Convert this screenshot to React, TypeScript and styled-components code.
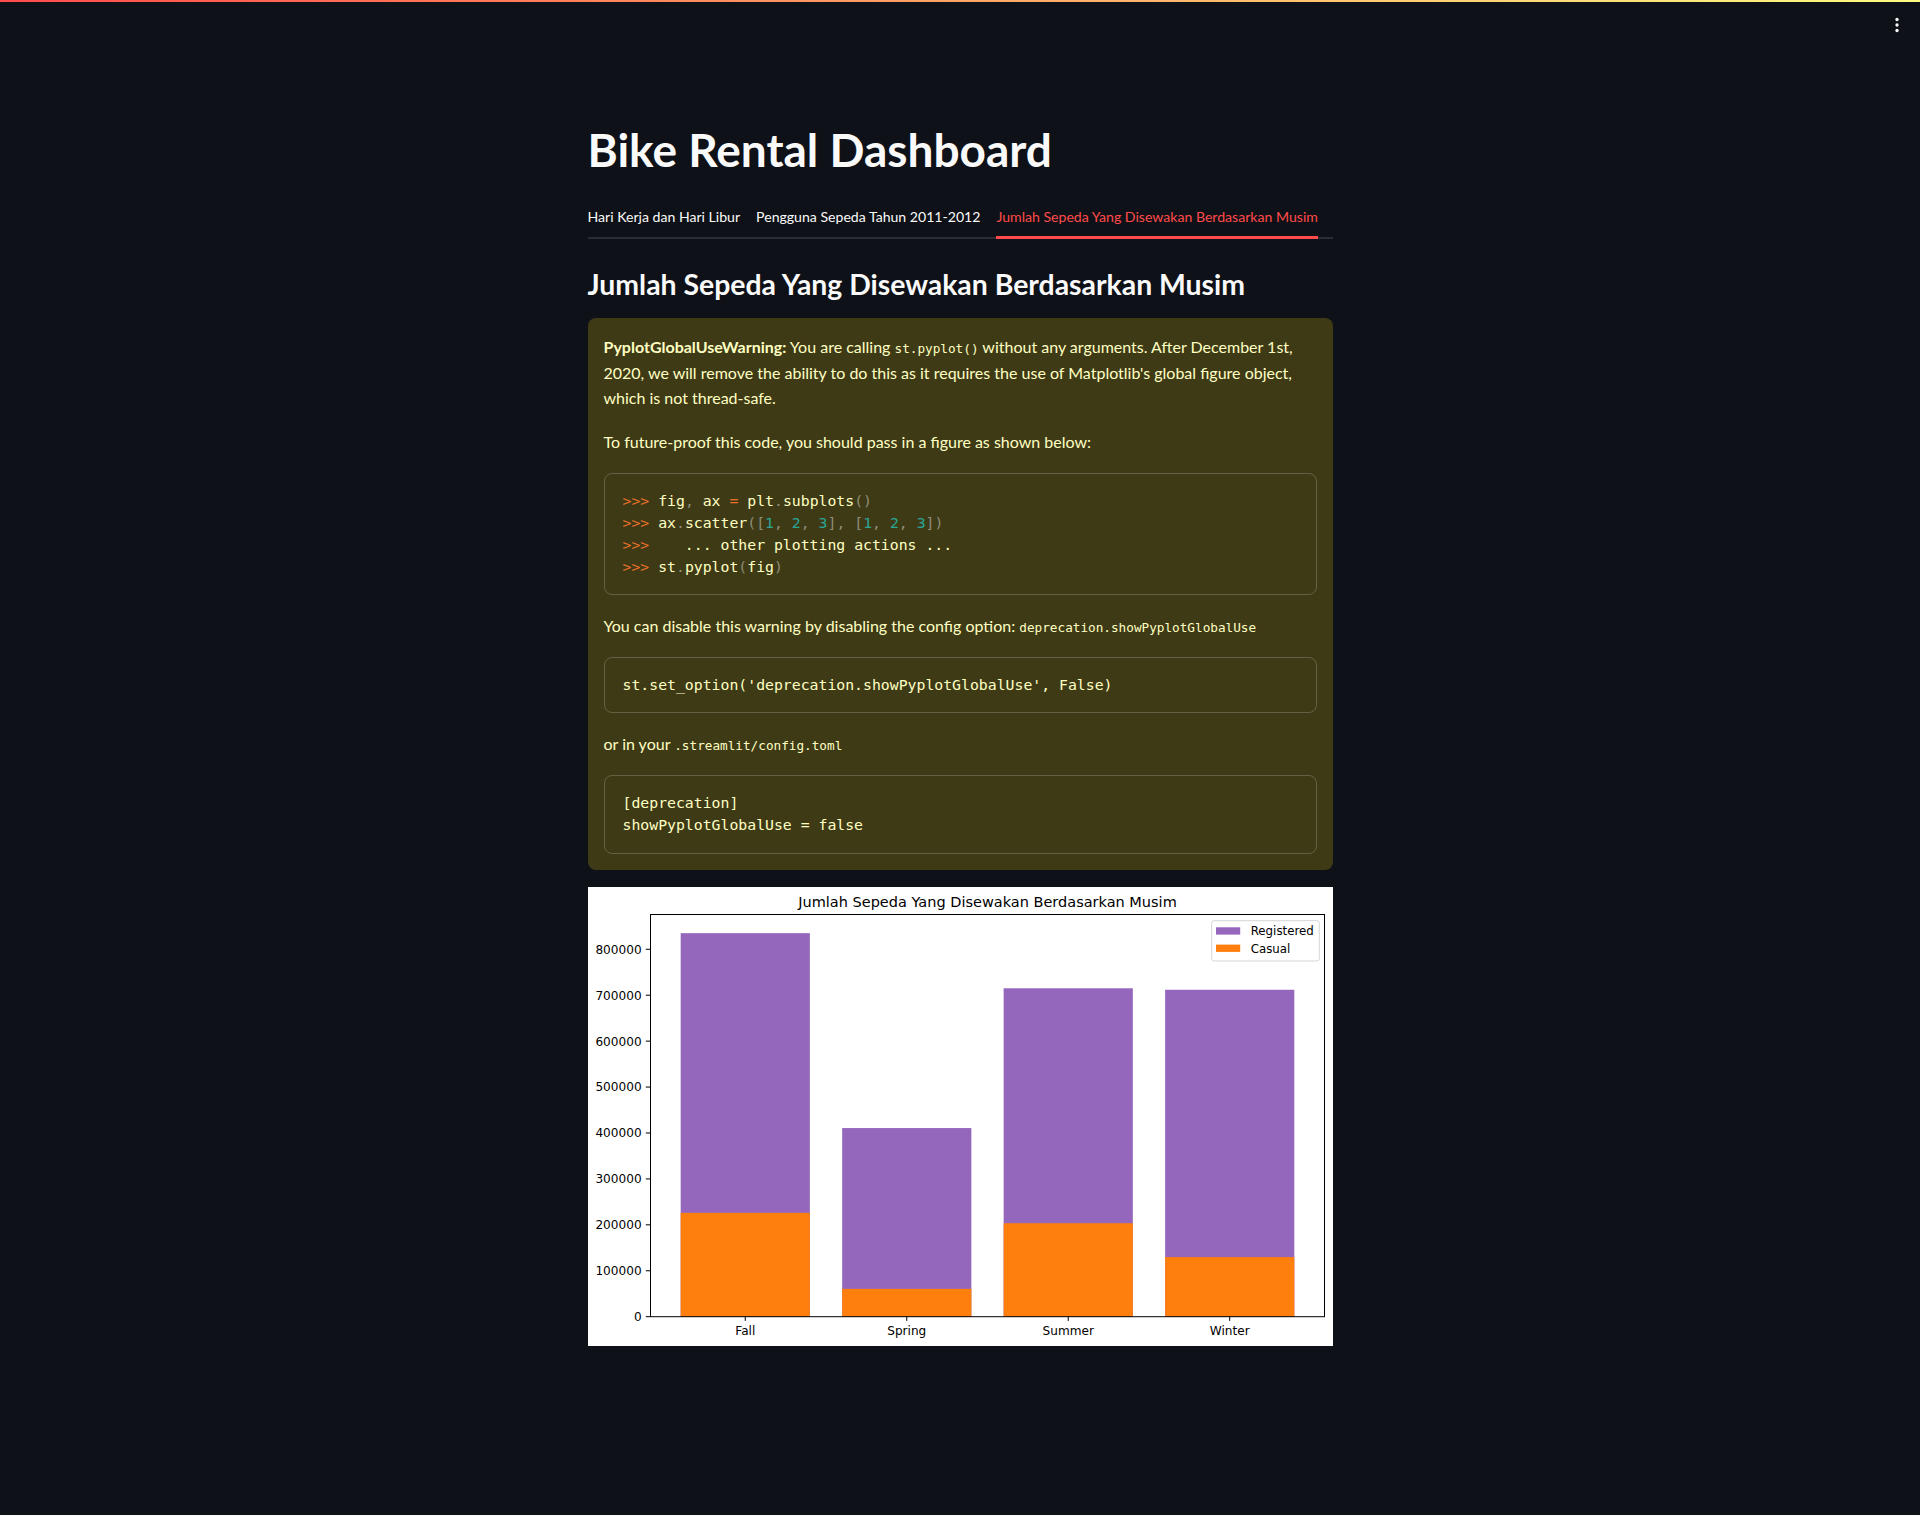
import React from "react";
import styled, { createGlobalStyle } from "styled-components";

const GlobalStyle = createGlobalStyle`
  html, body {
    margin: 0;
    padding: 0;
    background: #0e1117;
  }
  body {
    font-family: Lato, "Noto Sans", sans-serif;
    color: #fafafa;
    -webkit-font-smoothing: antialiased;
  }
  #root {
    min-height: 1515px;
  }
`;

const Decoration = styled.div`
  height: 2px;
  background: linear-gradient(90deg, #ff4b4b, #fffd80);
`;

const Header = styled.header`
  height: 46px;
  display: flex;
  align-items: center;
  justify-content: flex-end;
  padding-right: 12px;
`;

const MenuButton = styled.button`
  width: 22px;
  height: 22px;
  padding: 0;
  border: 0;
  background: transparent;
  color: #fafafa;
  display: flex;
  align-items: center;
  justify-content: center;
  cursor: pointer;
`;

const Main = styled.main`
  width: 745px;
  margin: 0 auto;
  padding: 74px 0 160px;
  display: flex;
  flex-direction: column;
`;

const Title = styled.h1`
  margin: 0 0 20px;
  font-size: 46px;
  font-weight: 700;
  line-height: 1.2;
  color: #fafafa;
`;

const TabList = styled.div`
  display: flex;
  gap: 16px;
  height: 40px;
  border-bottom: 2px solid #2b2c35;
  margin-bottom: 28px;
`;

const Tab = styled.button<{ $active?: boolean }>`
  align-self: flex-start;
  box-sizing: border-box;
  height: 42px;
  padding: 0;
  margin: 0;
  border: 0;
  border-bottom: 3px solid ${(p) => (p.$active ? "#ff4b4b" : "transparent")};
  background: none;
  font-family: inherit;
  font-size: 14.1px;
  color: ${(p) => (p.$active ? "#ff4b4b" : "#fafafa")};
  cursor: pointer;
  white-space: nowrap;
`;

const SectionTitle = styled.h2`
  margin: 0 0 17px;
  font-size: 28.4px;
  font-weight: 700;
  line-height: 1.2;
  color: #fafafa;
`;

const Alert = styled.div`
  background: rgba(255, 227, 18, 0.2);
  color: #ffffc2;
  border-radius: 8px;
  padding: 16px;
  display: flex;
  flex-direction: column;
  gap: 18px;
  margin-bottom: 17px;
  font-size: 16px;
  line-height: 25.6px;
`;

const Para = styled.p`
  margin: 0;
`;

const Strong = styled.strong`
  font-weight: 700;
`;

const InlineCode = styled.code`
  font-family: "DejaVu Sans Mono", "Liberation Mono", monospace;
  font-size: 12.7px;
  line-height: 1;
`;

const CodeBlock = styled.pre`
  margin: 0;
  border: 1px solid rgba(250, 250, 250, 0.2);
  border-radius: 8px;
  padding: 16.3px 18px;
  font-family: "DejaVu Sans Mono", "Liberation Mono", monospace;
  font-size: 14.8px;
  line-height: 22px;
  color: #ffffc2;
  white-space: pre;
  overflow: hidden;
`;

const Tok = styled.span<{ $kind: "prompt" | "punct" | "num" | "op" }>`
  color: ${(p) =>
    p.$kind === "prompt" || p.$kind === "op"
      ? "#e8702a"
      : p.$kind === "num"
      ? "#2aa596"
      : "#8f8d76"};
`;

const ChartFrame = styled.figure`
  margin: 0;
  width: 745px;
  height: 459px;
  background: #ffffff;
`;

const ChartSvg = styled.svg`
  display: block;
  width: 745px;
  height: 459px;
  font-family: "DejaVu Sans", sans-serif;
`;

const data = [
  { label: "Fall", registered: 835038, casual: 226091 },
  { label: "Spring", registered: 410726, casual: 60622 },
  { label: "Summer", registered: 715067, casual: 203522 },
  { label: "Winter", registered: 711831, casual: 129782 },
];

const AX = { left: 62, right: 737, top: 27, bottom: 429.7 };
const PURPLE = "#9467bd";
const ORANGE = "#ff7f0e";

function BarChart() {
  const ymax = 835038 * 1.05;
  const s = (AX.bottom - AX.top) / ymax;
  const u = (AX.right - AX.left) / 4.18;
  const cx = (i: number) => AX.left + (0.59 + i) * u;
  const bw = 0.8 * u;
  const y = (v: number) => AX.bottom - v * s;
  const ticks = [0, 100000, 200000, 300000, 400000, 500000, 600000, 700000, 800000];
  return (
    <ChartSvg viewBox="0 0 745 459">
      <text x={(AX.left + AX.right) / 2} y={20} fontSize={14.5} textAnchor="middle" fill="#000">
        Jumlah Sepeda Yang Disewakan Berdasarkan Musim
      </text>
      {data.map((d, i) => (
        <g key={d.label}>
          <rect x={cx(i) - bw / 2} y={y(d.registered)} width={bw} height={AX.bottom - y(d.registered)} fill={PURPLE} />
          <rect x={cx(i) - bw / 2} y={y(d.casual)} width={bw} height={AX.bottom - y(d.casual)} fill={ORANGE} />
          <line x1={cx(i)} x2={cx(i)} y1={AX.bottom} y2={AX.bottom + 4.2} stroke="#000" strokeWidth={1} />
          <text x={cx(i)} y={448} fontSize={12.1} textAnchor="middle" fill="#000">
            {d.label}
          </text>
        </g>
      ))}
      {ticks.map((t) => (
        <g key={t}>
          <line x1={AX.left - 4.2} x2={AX.left} y1={y(t)} y2={y(t)} stroke="#000" strokeWidth={1} />
          <text x={53.6} y={y(t) + 4.4} fontSize={12.1} textAnchor="end" fill="#000">
            {t}
          </text>
        </g>
      ))}
      <rect
        x={AX.left + 0.5}
        y={AX.top + 0.5}
        width={AX.right - AX.left - 1}
        height={AX.bottom - AX.top - 0.5}
        fill="none"
        stroke="#000"
        strokeWidth={1}
      />
      <g>
        <rect x={623.7} y={33.7} width={107.6} height={40.3} rx={2.5} fill="#ffffff" fillOpacity={0.8} stroke="#d5d5d5" strokeWidth={1} />
        <rect x={628} y={40.3} width={24.2} height={7.3} fill={PURPLE} />
        <rect x={628} y={57.6} width={24.2} height={7.3} fill={ORANGE} />
        <text x={662.7} y={48.4} fontSize={11.8} fill="#000">
          Registered
        </text>
        <text x={662.7} y={66.2} fontSize={11.8} fill="#000">
          Casual
        </text>
      </g>
    </ChartSvg>
  );
}

const P = ({ k, children }: { k: "prompt" | "punct" | "num" | "op"; children: React.ReactNode }) => (
  <Tok $kind={k}>{children}</Tok>
);

export default function App() {
  return (
    <>
      <GlobalStyle />
      <Decoration />
      <Header>
        <MenuButton aria-label="Main menu">
          <svg width="22" height="22" viewBox="0 0 24 24" fill="currentColor">
            <circle cx="12" cy="6" r="1.8" />
            <circle cx="12" cy="12" r="1.8" />
            <circle cx="12" cy="18" r="1.8" />
          </svg>
        </MenuButton>
      </Header>
      <Main>
        <Title>Bike Rental Dashboard</Title>
        <TabList role="tablist">
          <Tab role="tab">Hari Kerja dan Hari Libur</Tab>
          <Tab role="tab">Pengguna Sepeda Tahun 2011-2012</Tab>
          <Tab role="tab" $active>
            Jumlah Sepeda Yang Disewakan Berdasarkan Musim
          </Tab>
        </TabList>
        <SectionTitle>Jumlah Sepeda Yang Disewakan Berdasarkan Musim</SectionTitle>
        <Alert>
          <Para>
            <Strong>PyplotGlobalUseWarning:</Strong>
            {" You are calling "}
            <InlineCode>st.pyplot()</InlineCode>
            {" without any arguments. After December 1st, "}
            {"2020, we will remove the ability to do this as it requires the use of Matplotlib's global figure object, "}
            {"which is not thread-safe."}
          </Para>
          <Para>To future-proof this code, you should pass in a figure as shown below:</Para>
          <CodeBlock>
            <P k="prompt">&gt;&gt;&gt;</P> fig<P k="punct">,</P> ax <P k="op">=</P> plt<P k="punct">.</P>subplots
            <P k="punct">()</P>
            {"\n"}
            <P k="prompt">&gt;&gt;&gt;</P> ax<P k="punct">.</P>scatter<P k="punct">([</P>
            <P k="num">1</P>
            <P k="punct">, </P>
            <P k="num">2</P>
            <P k="punct">, </P>
            <P k="num">3</P>
            <P k="punct">], [</P>
            <P k="num">1</P>
            <P k="punct">, </P>
            <P k="num">2</P>
            <P k="punct">, </P>
            <P k="num">3</P>
            <P k="punct">])</P>
            {"\n"}
            <P k="prompt">&gt;&gt;&gt;</P>
            {"    ... other plotting actions ..."}
            {"\n"}
            <P k="prompt">&gt;&gt;&gt;</P> st<P k="punct">.</P>pyplot<P k="punct">(</P>fig<P k="punct">)</P>
          </CodeBlock>
          <Para>
            You can disable this warning by disabling the config option:{" "}
            <InlineCode>deprecation.showPyplotGlobalUse</InlineCode>
          </Para>
          <CodeBlock>st.set_option('deprecation.showPyplotGlobalUse', False)</CodeBlock>
          <Para>
            or in your <InlineCode>.streamlit/config.toml</InlineCode>
          </Para>
          <CodeBlock>{"[deprecation]\nshowPyplotGlobalUse = false"}</CodeBlock>
        </Alert>
        <ChartFrame>
          <BarChart />
        </ChartFrame>
      </Main>
    </>
  );
}
